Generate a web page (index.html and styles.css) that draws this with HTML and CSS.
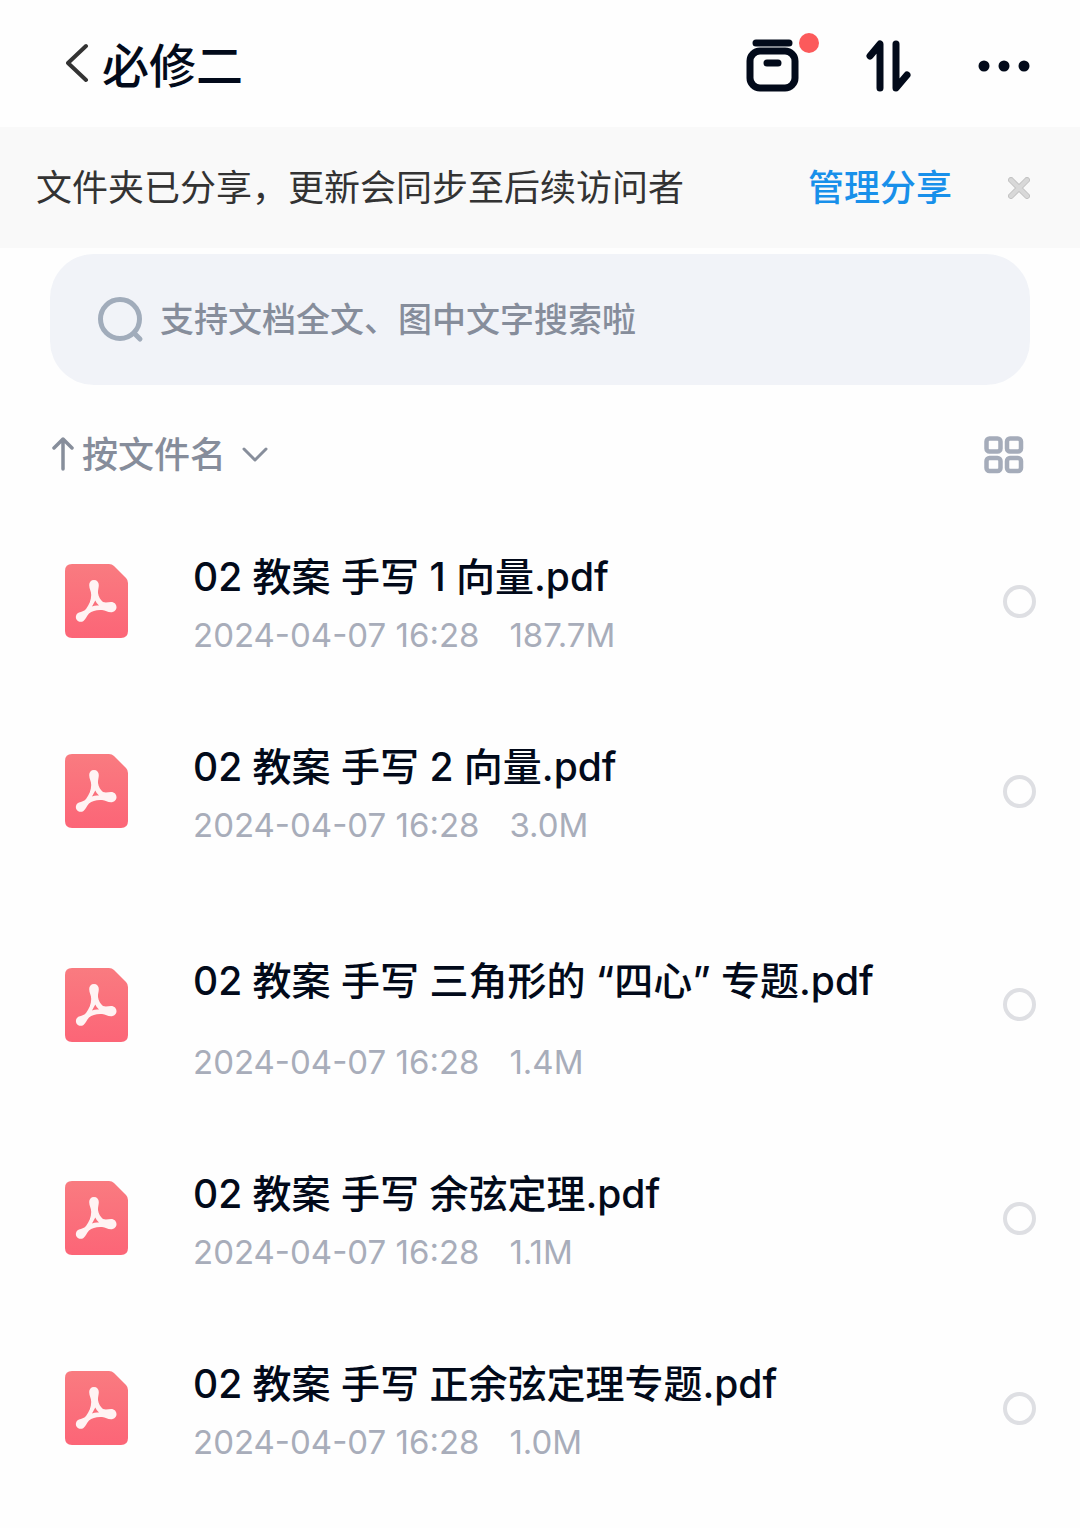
FILE: index.html
```html
<!DOCTYPE html>
<html lang="zh-CN">
<head>
<meta charset="utf-8">
<meta name="viewport" content="width=device-width, initial-scale=1">
<title>必修二</title>
<link rel="stylesheet" href="styles.css">
</head>
<body>
<svg class="defs" aria-hidden="true">
  <linearGradient id="pdf-fill" x1="0" y1="0" x2="0" y2="1">
    <stop offset="0" stop-color="#f97b80"/>
    <stop offset="1" stop-color="#fc6577"/>
  </linearGradient>
  <symbol id="pdf" viewBox="0 0 64 74">
    <path d="M7 0h37q3 0 5 2l12 12q2 2 2 5v48q0 7-7 7H7q-7 0-7-7V7q0-7 7-7z" fill="url(#pdf-fill)"/>
    <path d="M29 16C32 16 33.800 18 33.800 21C33.800 24 32.800 26 33 29C33.500 33 35.500 36 38 38C41 39 43.500 38 46 38C49.500 38 51.500 40.500 51.500 43.300C51.500 46 49 48.300 46 48.300C42.500 48.300 40.500 46.500 37 46C32 45.500 27 47 24 49.500C21.500 52 21 55 18.500 57C16 58.500 13 58 11.500 55.500C10 52.500 11.500 49.500 14 48.500C16.500 47.500 19 47.500 21 45C24 41 26.200 36 26.200 31C26.200 27 24.200 25 24.200 21C24.200 18 26 16 29 16zM30.300 36.500L27 42.500Q30 41 34 41.500Q31.500 39.500 30.300 36.500z" fill="#fff3f3" fill-rule="evenodd"/>
  </symbol>
</svg>
<header class="topbar">
  <button class="icon-btn" type="button" aria-label="返回">
    <svg width="24" height="46" viewBox="0 0 24 46" fill="none" stroke="#333" stroke-width="4" stroke-linecap="round" stroke-linejoin="round"><path d="M20 3L2 20l18 17"/></svg>
  </button>
  <h1 class="title">必修二</h1>
  <div class="actions">
    <button class="icon-btn transfer" type="button" aria-label="传输列表">
      <svg width="54" height="54" viewBox="0 0 54 54" fill="none" stroke="#020a1a" stroke-width="7" stroke-linecap="round"><path d="M10 4h33M21 24h11"/><rect x="4" y="12" width="45" height="37" rx="10"/></svg>
      <span class="dot"></span>
    </button>
    <button class="icon-btn" type="button" aria-label="排序">
      <svg width="46" height="52" viewBox="0 0 46 52" fill="none" stroke="#020a1a" stroke-width="7" stroke-linecap="round" stroke-linejoin="round"><path d="M4 16L14 4v44M30 4v44l11-13"/></svg>
    </button>
    <button class="icon-btn" type="button" aria-label="更多">
      <svg width="52" height="12" viewBox="0 0 52 12" fill="#020a1a"><circle cx="6" cy="6" r="5.500"/><circle cx="26" cy="6" r="5.500"/><circle cx="46" cy="6" r="5.500"/></svg>
    </button>
  </div>
</header>
<section class="banner">
  <p class="banner-text">文件夹已分享，更新会同步至后续访问者</p>
  <a class="manage" href="#share">管理分享</a>
  <button class="icon-btn" type="button" aria-label="关闭">
    <svg width="22" height="22" viewBox="0 0 22 22" fill="none" stroke-linecap="round"><path d="M3 3l16 16M19 3L3 19" stroke="#c4c4c4" stroke-width="6"/><path d="M3 3l16 16M19 3L3 19" stroke="#d8d8d8" stroke-width="4"/></svg>
  </button>
</section>
<main>
  <label class="search">
    <svg width="46" height="46" viewBox="0 0 46 46" fill="none" stroke="#a1acbb" stroke-width="5" stroke-linecap="round"><circle cx="22" cy="22" r="19.500"/><path d="M36 36l6 6"/></svg>
    <input type="search" aria-label="搜索" placeholder="支持文档全文、图中文字搜索啦">
  </label>
  <div class="toolbar">
    <button class="sort" type="button">
      <svg width="22" height="36" viewBox="0 0 22 36" fill="none" stroke="#878e9b" stroke-width="3.500" stroke-linecap="round" stroke-linejoin="round"><path d="M11 32V2M2 11l9-9 9 9"/></svg>
      <span>按文件名</span>
      <svg class="chevron" width="26" height="16" viewBox="0 0 26 16" fill="none" stroke="#878e9b" stroke-width="3" stroke-linecap="round" stroke-linejoin="round"><path d="M2 2l11 11L24 2"/></svg>
    </button>
    <button class="icon-btn" type="button" aria-label="网格视图">
      <svg width="40" height="38" viewBox="0 0 40 38" fill="none" stroke="#a5acba" stroke-width="4.500"><rect x="2.500" y="2.500" width="14" height="13" rx="3"/><rect x="23" y="2.500" width="14" height="13" rx="3"/><rect x="2.500" y="22" width="14" height="13" rx="3"/><rect x="23" y="22" width="14" height="13" rx="3"/></svg>
    </button>
  </div>
  <ul class="files">
    <li class="file">
      <svg class="file-icon" aria-hidden="true"><use href="#pdf"/></svg>
      <div class="info">
        <label class="name" for="f1">02 教案 手写 1 向量.pdf</label>
        <p class="meta"><span>2024-04-07 16:28</span><span>187.7M</span></p>
      </div>
      <input class="pick" type="checkbox" id="f1">
    </li>
    <li class="file">
      <svg class="file-icon" aria-hidden="true"><use href="#pdf"/></svg>
      <div class="info">
        <label class="name" for="f2">02 教案 手写 2 向量.pdf</label>
        <p class="meta"><span>2024-04-07 16:28</span><span>3.0M</span></p>
      </div>
      <input class="pick" type="checkbox" id="f2">
    </li>
    <li class="file">
      <svg class="file-icon" aria-hidden="true"><use href="#pdf"/></svg>
      <div class="info">
        <label class="name name-tall" for="f3">02 教案 手写 三角形的 “四心” 专题.pdf</label>
        <p class="meta"><span>2024-04-07 16:28</span><span>1.4M</span></p>
      </div>
      <input class="pick" type="checkbox" id="f3">
    </li>
    <li class="file">
      <svg class="file-icon" aria-hidden="true"><use href="#pdf"/></svg>
      <div class="info">
        <label class="name" for="f4">02 教案 手写 余弦定理.pdf</label>
        <p class="meta"><span>2024-04-07 16:28</span><span>1.1M</span></p>
      </div>
      <input class="pick" type="checkbox" id="f4">
    </li>
    <li class="file">
      <svg class="file-icon" aria-hidden="true"><use href="#pdf"/></svg>
      <div class="info">
        <label class="name" for="f5">02 教案 手写 正余弦定理专题.pdf</label>
        <p class="meta"><span>2024-04-07 16:28</span><span>1.0M</span></p>
      </div>
      <input class="pick" type="checkbox" id="f5">
    </li>
  </ul>
</main>
</body>
</html>
```
FILE: styles.css
```css
* {
  box-sizing: border-box;
}

body {
  margin: 0;
  background: #fefefe;
  color: #020a1a;
  font-family: Inter, "Noto Sans CJK SC", sans-serif;
}

h1,
p,
ul {
  margin: 0;
  padding: 0;
}

button {
  padding: 0;
  border: 0;
  background: none;
  color: inherit;
  font: inherit;
}

svg {
  display: block;
  flex: none;
}

.defs {
  position: absolute;
  width: 0;
  height: 0;
}

.icon-btn {
  flex: none;
}

.topbar {
  display: flex;
  align-items: center;
  gap: 12px;
  padding: 32px 50px 27px 66px;
}

.title {
  flex: 1;
  font-size: 47px;
  font-weight: 500;
  line-height: 68px;
}

.actions {
  display: flex;
  align-items: center;
  gap: 66px;
}

.transfer {
  position: relative;
}

.dot {
  position: absolute;
  top: -6px;
  right: -19px;
  width: 20px;
  height: 20px;
  border-radius: 50%;
  background: #fc5a5b;
}

.banner {
  display: flex;
  align-items: center;
  padding: 35px 50px 34px 36px;
  background: #f9f9f9;
  font-size: 36px;
  line-height: 52px;
}

.banner-text {
  flex: 1;
  color: #333;
}

.manage {
  margin-right: 56px;
  color: #1890ea;
  font-weight: 500;
  text-decoration: none;
}

.search {
  display: flex;
  align-items: center;
  gap: 16px;
  margin: 6px 50px 0;
  padding: 41px 48px 40px;
  border-radius: 44px;
  background: #f1f3f8;
}

.search input {
  flex: 1;
  min-width: 0;
  height: 50px;
  padding: 0;
  border: 0;
  outline: 0;
  background: none;
  color: #020a1a;
  font: 500 34px/50px Inter, "Noto Sans CJK SC", sans-serif;
}

.search input::placeholder {
  color: #868d9b;
  opacity: 1;
}

.toolbar {
  display: flex;
  align-items: center;
  justify-content: space-between;
  padding: 44px 56px 25px 52px;
}

.sort {
  display: flex;
  align-items: center;
  gap: 8px;
  color: #868d9b;
  font-size: 36px;
  font-weight: 500;
  line-height: 52px;
}

.chevron {
  margin-left: 8px;
}

.files {
  list-style: none;
}

.file {
  display: flex;
  align-items: center;
  padding: 42px 44px 42px 65px;
}

.file-icon {
  width: 64px;
  height: 74px;
}

.info {
  flex: 1;
  margin-left: 64px;
}

.name {
  display: flex;
  align-items: center;
  min-height: 58px;
  font-size: 39px;
  font-weight: 500;
  line-height: 58px;
}

.name-tall {
  min-height: 105px;
}

.meta {
  display: flex;
  gap: 30px;
  margin-top: 10px;
  color: #a8adba;
  font-size: 33px;
  line-height: 38px;
}

.pick {
  appearance: none;
  flex: none;
  width: 33px;
  height: 33px;
  margin: 0;
  border: 4px solid #dedfe3;
  border-radius: 50%;
}
```
